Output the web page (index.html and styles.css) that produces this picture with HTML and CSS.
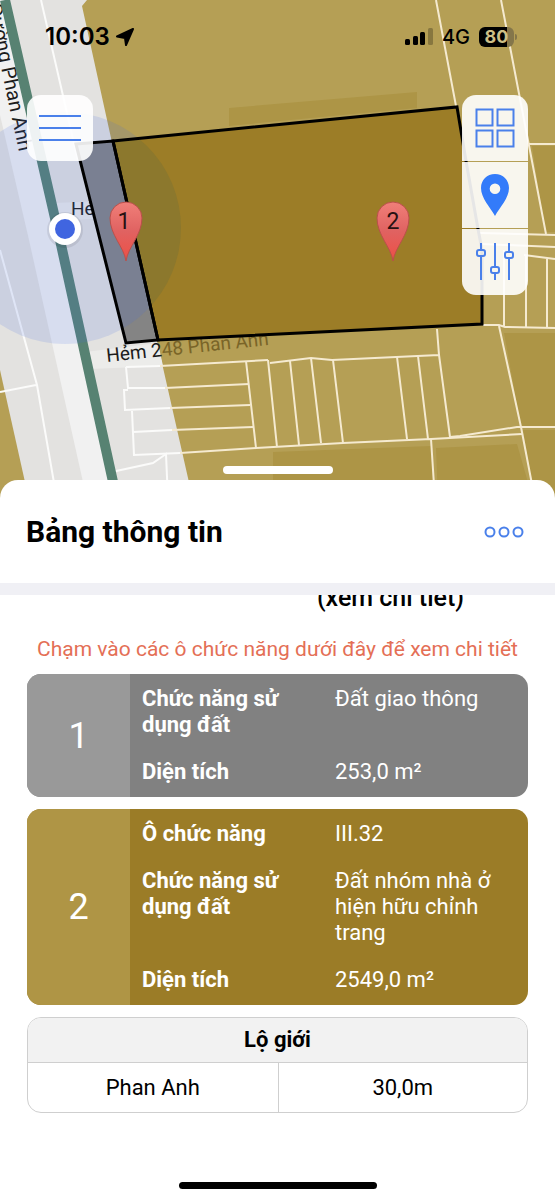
FILE: index.html
```html
<!DOCTYPE html>
<html lang="vi">
<head>
<meta charset="utf-8">
<meta name="viewport" content="width=device-width, initial-scale=1">
<title>Bảng thông tin</title>
<link rel="stylesheet" href="styles.css">
</head>
<body>
<div class="app">
  <section class="map">
    <svg class="map-canvas" viewBox="0 0 555 500" preserveAspectRatio="xMidYMin slice" aria-hidden="true">
      <defs>
        <clipPath id="parcel2"><path d="M113 141L457 107L466 161L478 229L482 250V324L158 340Z"/></clipPath>
        <linearGradient id="pinFill" x1="0" y1="0" x2="0" y2="1">
          <stop offset="0" stop-color="#f07f79"/><stop offset="0.5" stop-color="#e06261"/><stop offset="1" stop-color="#ee4f45"/>
        </linearGradient>
      </defs>
      <rect width="555" height="500" fill="#b59f55"/>
      <!-- darker building blocks -->
      <g fill="#ad9546">
        <path d="M229 108L417 92V108L229 126Z"/>
        <path d="M504 333H555V427H521Z"/>
        <path d="M273 452L431 446L434 500H273Z"/>
        <path d="M436 448L517 444L533 500H438Z"/>
        <path d="M523 430H555V500H535Z"/>
        <path d="M532 146H555V232H545Z"/>
      </g>
      <!-- road reserve -->
      <path d="M0 0H87L82 6L111 138L193 500H0Z" fill="#e3e2e0"/>
      <path d="M0 370L29 500H0Z" fill="#b59f55"/>
      <path d="M0 0H5L60 240L117 500H87L29 240L0 115Z" fill="#f1f1f1"/>
      <path d="M85 352L158 343L163 366L90 369Z" fill="#ececea"/>
      <path d="M55 203L128 200L136 216L60 221Z" fill="#ececea"/>
      <!-- plot outlines on the road reserve -->
      <g fill="none" stroke="#fbfbfa" stroke-width="2">
        <path d="M41 0L78 161M0 250L37 385L57 500M0 392L36 385"/>
        <path d="M107 473L153 463L166 454L168 500"/>
      </g>
      <!-- plot outlines -->
      <g fill="none" stroke="#f5ead0" stroke-width="2">
        <path d="M436 0L456 106M501 0L546 234M528 144H555"/>
        <path d="M480 233L555 235M482 244L555 247M524 255L555 259"/>
        <path d="M483 325H499L505 327L555 328M504 250V326M526 256V327M547 259V327"/>
        <path d="M499 326L521 427L535 500M450 437L460 436L517 427H555"/>
        <path d="M437 329L439 355L450 437M439 355L332 360L311 358L270 363"/>
        <path d="M290 361L299 445M311 358L321 443M333 360L343 443M397 357L407 439M418 356L428 439M268 360L277 447M246 361L256 448"/>
        <path d="M180 453L256 448L343 443L431 439L522 434M431 439L435 500"/>
        <path d="M160 366L268 360M165 388L249 384M170 408L250 405M172 430L253 427"/>
      </g>
      <path d="M126 367L160 366M126 367L128 388L165 388M128 390H124L125 410L170 408M132 411L134 455L180 453M133 432L172 430" fill="none" stroke="#fbfbfa" stroke-width="2"/>
      <g class="street">
        <text transform="translate(19 152) rotate(78)" text-anchor="end" font-size="20">Đường Phan Anh</text>
        <text x="71" y="215">Hẻm</text>
        <text transform="translate(107 362) rotate(-6)">Hẻm 2<tspan fill="#7a6528">48 Phan Anh</tspan></text>
      </g>
      <path d="M5 0L60 240L117 500" fill="none" stroke="#578272" stroke-width="10"/>
      <!-- selected parcels with the accuracy circle -->
      <path d="M76 144L113 141L158 340L126 343Z" fill="#848484"/>
      <circle cx="65" cy="228" r="116" fill="#4169e1" fill-opacity="0.15"/>
      <path d="M113 141L457 107L466 161L478 229L482 250V324L158 340Z" fill="#9c7d27"/>
      <circle cx="65" cy="228" r="116" fill="#8c782d" clip-path="url(#parcel2)"/>
      <g fill="none" stroke="#000" stroke-width="3">
        <path d="M76 144L113 141L158 340L126 343Z"/>
        <path d="M113 141L457 107L466 161L478 229L482 250V324L158 340Z"/>
      </g>
      <!-- user position -->
      <circle cx="65" cy="230" r="18" fill="#000" opacity="0.08"/>
      <circle cx="65" cy="229" r="16" fill="#fff"/>
      <circle cx="65" cy="229" r="10" fill="#4065e0"/>
      <!-- numbered pins -->
      <g stroke="#b9504a" stroke-width="1" fill="url(#pinFill)">
        <path d="M126 261C124 247 110 235 110 218A16 16 0 0 1 142 218C142 235 128 247 126 261Z"/>
        <path d="M393 261C391 247 377 235 377 218A16 16 0 0 1 409 218C409 235 395 247 393 261Z"/>
      </g>
      <g class="pin-number">
        <text x="124" y="229">1</text>
        <text x="393" y="229">2</text>
      </g>
    </svg>

    <div class="map-ui">
      <header class="status">
        <div class="status-group">
          <span class="time">10:03</span>
          <svg class="arrow" width="20" height="20" viewBox="0 0 20 20" aria-hidden="true"><path d="M18 2L2 9.500L10 11L11 18Z" fill="#000" stroke="#000" stroke-width="2" stroke-linejoin="round"/></svg>
        </div>
        <div class="status-group status-right">
          <svg width="28" height="18" viewBox="0 0 28 18" aria-hidden="true"><rect y="11" width="5" height="6" rx="1.500"/><rect x="8" y="8" width="5" height="9" rx="1.500"/><rect x="15" y="4" width="5" height="13" rx="1.500"/><rect x="23" width="5" height="17" rx="1.500" opacity=".25"/></svg>
          <span class="network">4G</span>
          <span class="battery">80</span>
        </div>
      </header>
      <div class="controls">
        <button class="tool menu" type="button" aria-label="Menu">
          <svg width="42" height="28" viewBox="0 0 42 28" aria-hidden="true"><path d="M0 2H42M0 14H42M0 26H42"/></svg>
        </button>
        <div class="tools">
          <button class="tool" type="button" aria-label="Lớp bản đồ">
            <svg width="40" height="40" viewBox="0 0 40 40" aria-hidden="true"><path d="M1.500 1.500H17.500V17.500H1.500ZM22.500 1.500H38.500V17.500H22.500ZM1.500 22.500H17.500V38.500H1.500ZM22.500 22.500H38.500V38.500H22.500Z"/></svg>
          </button>
          <button class="tool" type="button" aria-label="Vị trí">
            <svg width="28" height="42" viewBox="0 0 28 42" aria-hidden="true"><path class="solid" fill-rule="evenodd" d="M14 0C6 0 0 6 0 14C0 24 9 33 14 42C19 33 28 24 28 14C28 6 22 0 14 0ZM14 9.500A5.300 5.300 0 1 1 14 20.100A5.300 5.300 0 1 1 14 9.500Z"/></svg>
          </button>
          <button class="tool" type="button" aria-label="Bộ lọc">
            <svg width="38" height="38" viewBox="0 0 38 38" aria-hidden="true"><path d="M5 0V7M5 13V37M19 0V24M19 30V37M33 0V9M33 15V37"/><rect x="1" y="7" width="8" height="6" rx="2"/><rect x="15" y="24" width="8" height="6" rx="2"/><rect x="29" y="9" width="8" height="6" rx="2"/></svg>
          </button>
        </div>
      </div>
      <div class="grabber"></div>
    </div>
  </section>

  <main class="sheet">
    <header class="sheet-head">
      <h1>Bảng thông tin</h1>
      <button class="more" type="button" aria-label="Thêm">
        <svg width="40" height="12" viewBox="0 0 40 12" aria-hidden="true"><circle cx="6" cy="6" r="4.500"/><circle cx="20" cy="6" r="4.500"/><circle cx="34" cy="6" r="4.500"/></svg>
      </button>
    </header>
    <div class="sheet-body">
      <p class="detail-link">(xem chi tiết)</p>
      <p class="hint">Chạm vào các ô chức năng dưới đây để xem chi tiết</p>
      <button class="zone zone-road" type="button">
        <span class="zone-number">1</span>
        <span class="zone-info">
          <span class="label">Chức năng sử dụng đất</span><span class="value">Đất giao thông</span>
          <span class="label">Diện tích</span><span class="value">253,0 m²</span>
        </span>
      </button>
      <button class="zone zone-housing" type="button">
        <span class="zone-number">2</span>
        <span class="zone-info">
          <span class="label">Ô chức năng</span><span class="value">III.32</span>
          <span class="label">Chức năng sử dụng đất</span><span class="value">Đất nhóm nhà ở hiện hữu chỉnh trang</span>
          <span class="label">Diện tích</span><span class="value">2549,0 m²</span>
        </span>
      </button>
      <table class="widths">
        <thead><tr><th colspan="2">Lộ giới</th></tr></thead>
        <tbody><tr><td>Phan Anh</td><td>30,0m</td></tr></tbody>
      </table>
    </div>
    <div class="home-bar"></div>
  </main>
</div>
</body>
</html>
```
FILE: styles.css
```css
* { box-sizing: border-box; }

body {
  margin: 0;
  background: #fff;
  color: #000;
  font-family: Roboto, "Noto Sans", sans-serif;
  font-size: 22px;
  line-height: 26px;
}

button {
  margin: 0;
  padding: 0;
  border: 0;
  background: none;
  color: inherit;
  font: inherit;
  cursor: pointer;
}

svg { display: block; }

.app {
  display: flex;
  flex-direction: column;
  min-height: 100vh;
}

/* Map */
.map {
  position: relative;
  height: 500px;
  overflow: hidden;
}

.map-canvas {
  width: 100%;
  height: 100%;
}

.street {
  font-size: 19px;
  fill: #1c1c1c;
}

.pin-number {
  font-size: 23px;
  text-anchor: middle;
  fill: #2a1212;
}

.map-ui {
  position: absolute;
  inset: 0;
  display: flex;
  flex-direction: column;
  justify-content: space-between;
  padding-bottom: 26px;
}

.status {
  display: flex;
  justify-content: space-between;
  height: 74px;
  padding: 0 41px 0 45px;
  font-family: Inter, "Liberation Sans", sans-serif;
}

.status-group {
  display: flex;
  align-items: center;
  gap: 5px;
}

.status-right { gap: 9px; }

.time {
  font-size: 24px;
  font-weight: 600;
}

.network {
  font-size: 20px;
  font-weight: 500;
}

.battery {
  position: relative;
  width: 35px;
  height: 20px;
  border-radius: 6px;
  background: linear-gradient(90deg, #000 80%, #84764a 80%);
  color: #cdbf86;
  font-size: 18px;
  font-weight: 700;
  line-height: 20px;
  text-align: center;
}

.battery::after {
  content: "";
  position: absolute;
  top: 7px;
  right: -3px;
  width: 2px;
  height: 6px;
  border-radius: 0 2px 2px 0;
  background: #84764a;
}

.controls {
  display: flex;
  align-items: flex-start;
  justify-content: space-between;
  flex: 1;
  padding: 21px 27px 0;
}

.tools {
  display: flex;
  flex-direction: column;
  gap: 1px;
  overflow: hidden;
  border-radius: 14px;
}

.tool {
  display: grid;
  place-items: center;
  width: 66px;
  height: 66px;
  background: rgba(255, 255, 255, 0.9);
}

.menu { border-radius: 14px; }

.tool svg {
  fill: none;
  stroke: #4a80ea;
  stroke-width: 2;
}

.tool .solid {
  fill: #337bfa;
  stroke: none;
}

.grabber {
  align-self: center;
  width: 110px;
  height: 8px;
  border-radius: 4px;
  background: #fff;
}

/* Information sheet */
.sheet {
  position: relative;
  display: flex;
  flex-direction: column;
  flex: 1;
  margin-top: -20px;
  border-radius: 18px 18px 0 0;
  background: #fff;
}

.sheet-head {
  display: flex;
  align-items: center;
  justify-content: space-between;
  height: 115px;
  padding: 0 31px 0 26px;
  border-bottom: 12px solid #f0f0f5;
}

h1 {
  margin: 0;
  font-size: 30px;
  font-weight: 700;
  line-height: 36px;
}

.more svg {
  fill: none;
  stroke: #4a80ea;
  stroke-width: 2;
}

.sheet-body {
  display: flex;
  flex-direction: column;
  flex: 1;
  gap: 12px;
  overflow: hidden;
  padding: 0 27px;
}

.detail-link {
  margin: -10px 64px 0 0;
  font-size: 25px;
  font-weight: 500;
  text-align: right;
}

.hint {
  margin: 13px 0 0;
  color: #e46f56;
  font-size: 21px;
  text-align: center;
}

.zone {
  display: flex;
  overflow: hidden;
  border-radius: 14px;
  color: #fff;
  text-align: left;
}

.zone-road { background: #818181; }
.zone-housing { background: #9b7c27; }

.zone-number {
  display: grid;
  place-items: center;
  width: 103px;
  background: #999;
  font-size: 36px;
}

.zone-housing .zone-number { background: #af9545; }

.zone-info {
  display: grid;
  flex: 1;
  grid-template-columns: 1fr 1fr;
  row-gap: 21px;
  padding: 12px 0 12px 12px;
}

.label,
.value { padding-right: 24px; }

.label { font-weight: 700; }

.widths {
  width: 100%;
  overflow: hidden;
  border: 1px solid #cfcfcf;
  border-radius: 14px;
  border-spacing: 0;
  table-layout: fixed;
  text-align: center;
}

.widths th {
  padding: 9px 10px;
  background: #f2f2f2;
  font-weight: 700;
}

.widths td {
  padding: 12px 10px 11px;
  border-top: 1px solid #cfcfcf;
}

.widths td + td { border-left: 1px solid #cfcfcf; }

.home-bar {
  align-self: center;
  width: 198px;
  height: 7px;
  margin-bottom: 11px;
  border-radius: 4px;
  background: #000;
}
```
